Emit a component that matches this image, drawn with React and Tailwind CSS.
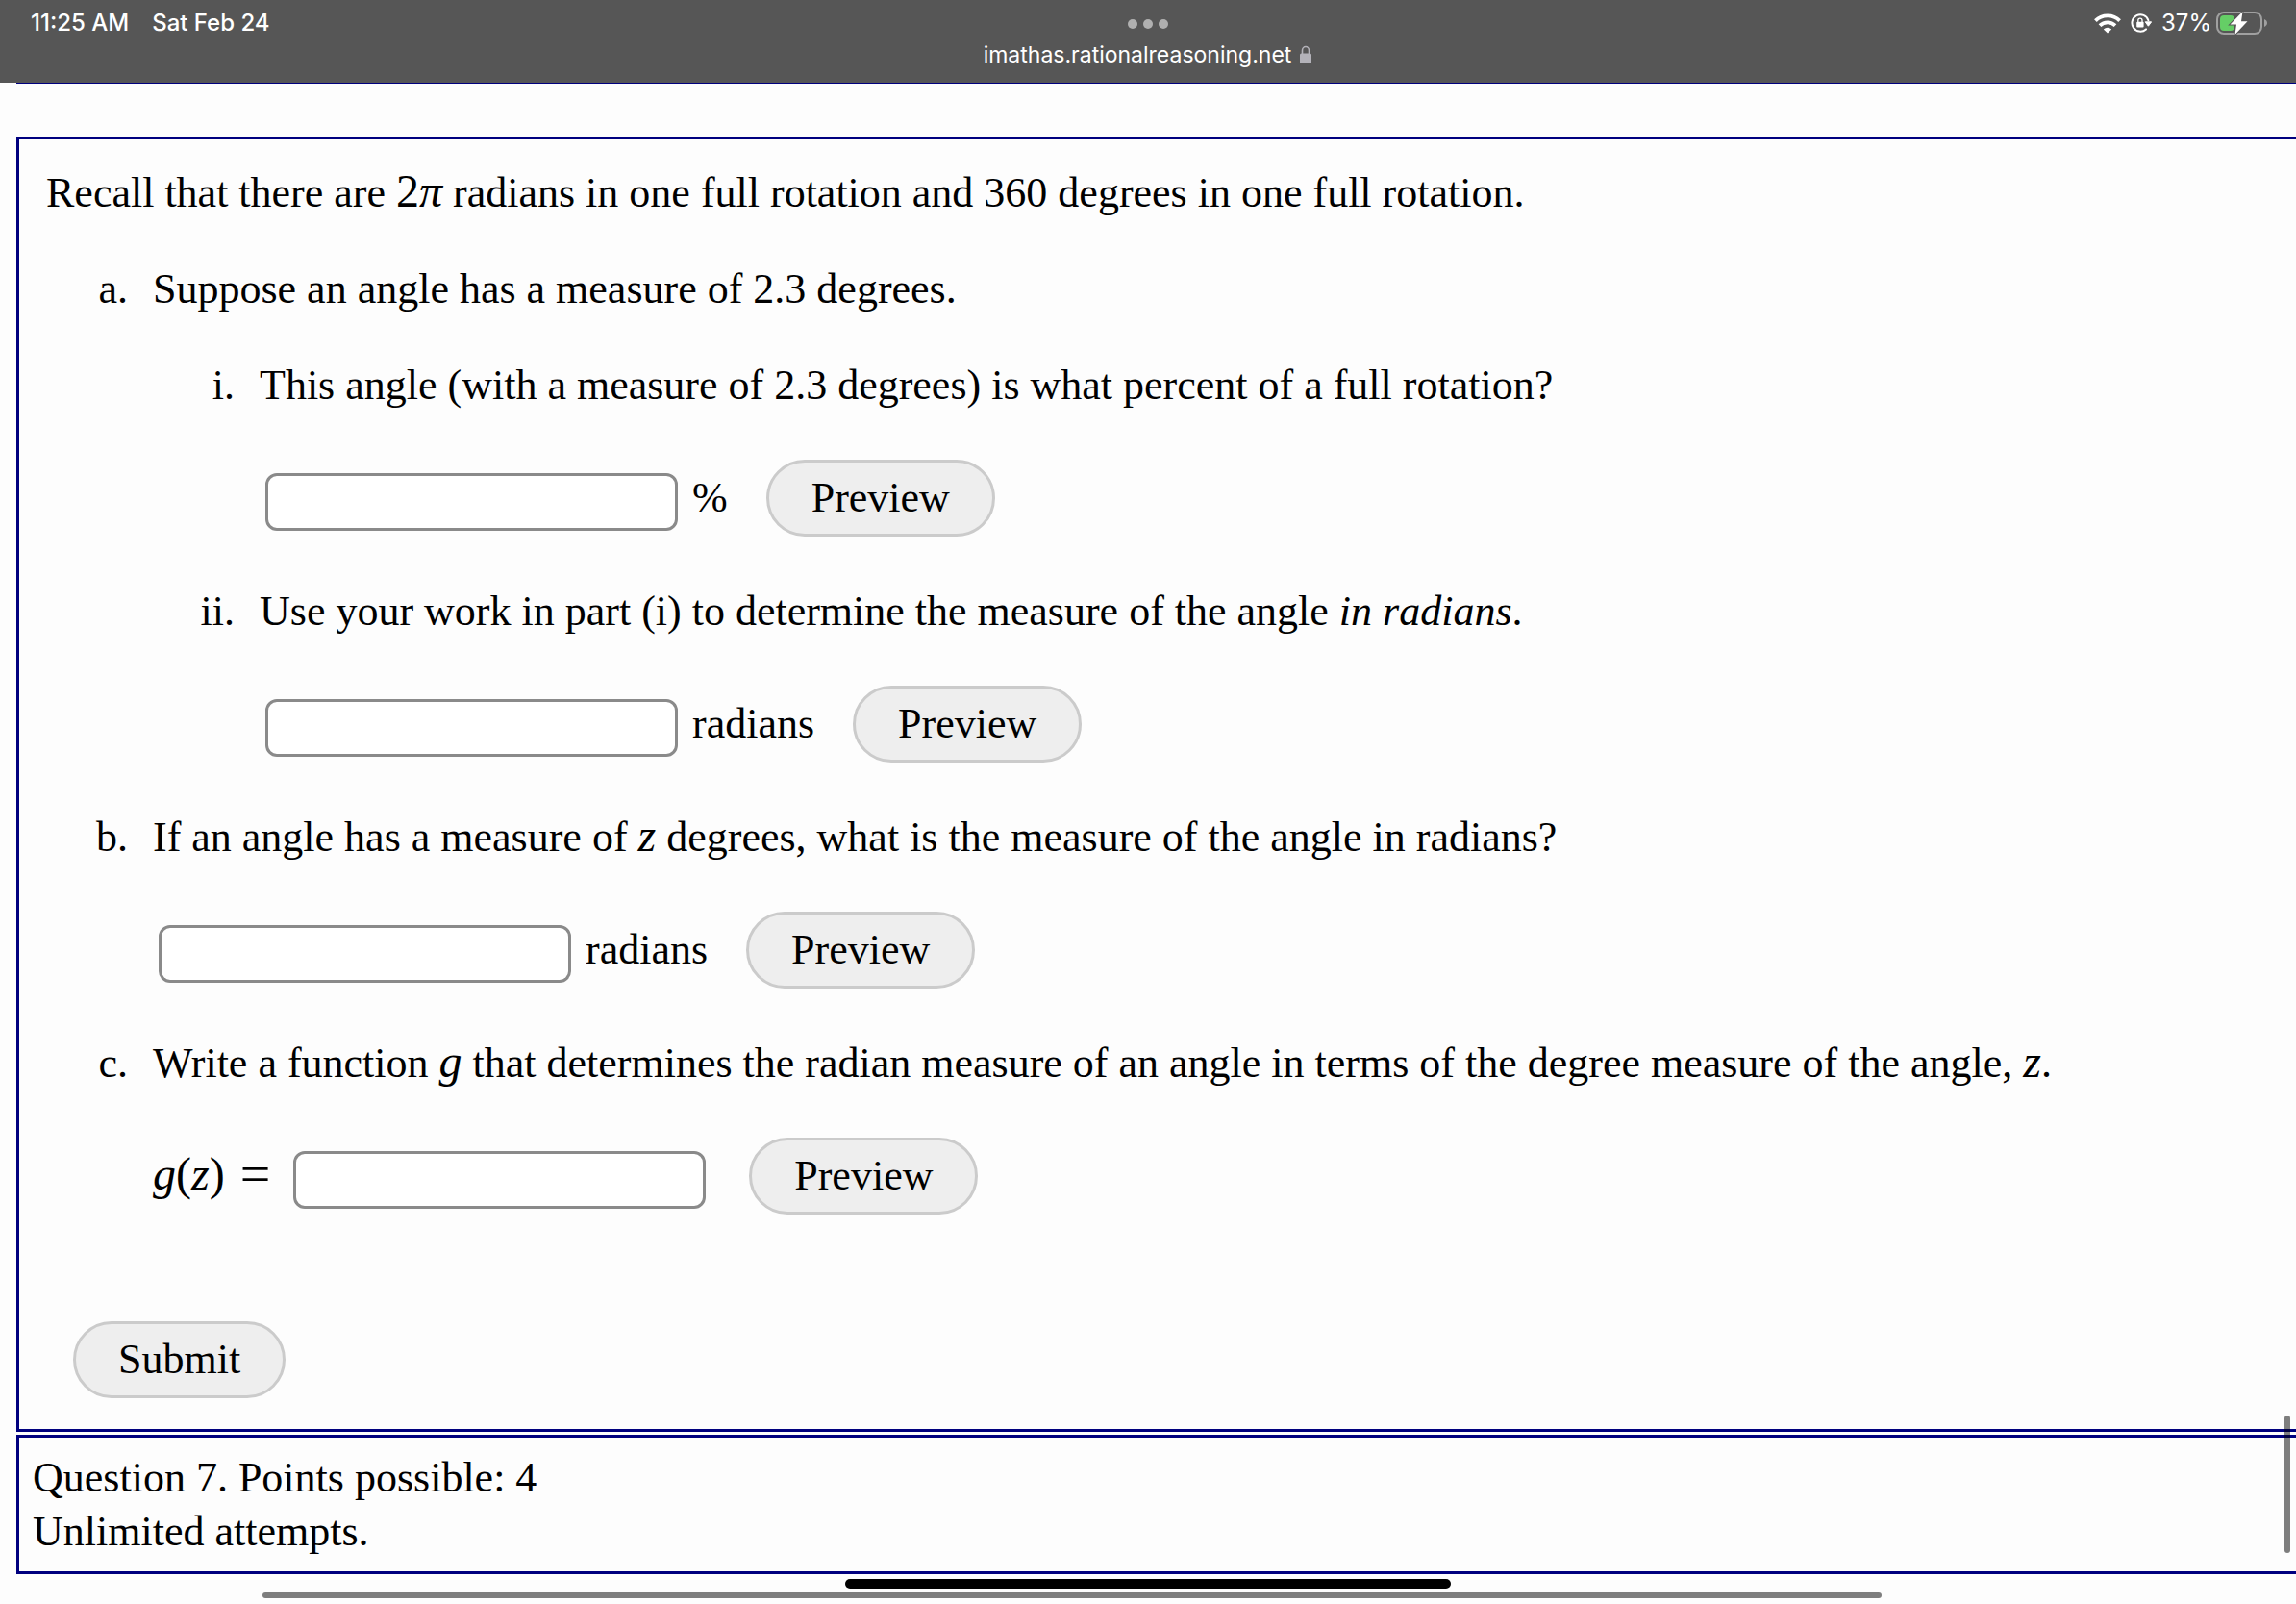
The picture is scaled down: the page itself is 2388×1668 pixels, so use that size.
const inputClass =
  "ml-[6px] h-[60px] w-[429px] rounded-[12px] border-[3px] border-[#8a8a8a] bg-white px-3 text-[32px] leading-none";

function PillButton({ children, className = "" }) {
  return (
    <button
      type="button"
      className={`h-[80px] rounded-[40px] border-[3px] border-[#cbcbcb] bg-[#eeeeee] px-[44px] leading-[56px] ${className}`}
    >
      {children}
    </button>
  );
}

function Item({ marker, children }) {
  return (
    <li className="flex">
      <span className="w-[111px] shrink-0 pr-[26px] text-right">{marker}</span>
      <div className="flex min-w-0 grow flex-col gap-[44px]">{children}</div>
    </li>
  );
}

function AnswerRow({ id, unit, label }) {
  return (
    <div className="flex items-baseline pt-[5px] pb-[6px]">
      <input id={id} type="text" aria-label={label} className={inputClass} />
      <label htmlFor={id} className="ml-[15px]">
        {unit}
      </label>
      <PillButton className="ml-[40px]">Preview</PillButton>
    </div>
  );
}

function M({ children }) {
  return <i className="text-[48px] leading-none italic">{children}</i>;
}

function WifiIcon() {
  return (
    <svg viewBox="0 0 28 21" className="h-[21px] w-[28px]" fill="none" stroke="white">
      <path d="M1.4 7.6a18 18 0 0 1 25.2 0" strokeWidth="3.8" />
      <path d="M6 12.6a11.4 11.4 0 0 1 16 0" strokeWidth="3.8" />
      <path d="M14 20.6l-4.200-4.200a6 6 0 0 1 8.400 0z" fill="white" stroke="none" />
    </svg>
  );
}

function RotationLockIcon() {
  return (
    <svg viewBox="0 0 22 20" className="h-[20px] w-[22px]" fill="none">
      <path d="M18.4 7.2A8.7 8.7 0 1 0 16 16.4" stroke="white" strokeWidth="2" strokeLinecap="round" />
      <path d="M15.2 8.8h6.4l-3.2 4.4z" fill="white" stroke="white" strokeLinejoin="round" />
      <rect x="6.2" y="8.8" width="7.4" height="5.6" rx="1" fill="white" />
      <path d="M7.8 9V7.2a2.1 2.1 0 0 1 4.2 0V9" stroke="white" strokeWidth="1.3" />
    </svg>
  );
}

function BatteryIcon() {
  return (
    <svg viewBox="0 0 54 26" className="h-[26px] w-[54px]">
      <rect x="1" y="2" width="46" height="22" rx="7" fill="none" stroke="#a0a0a0" strokeWidth="2" />
      <path d="M50 9v8c1.8-.8 3-2.200 3-4s-1.200-3.200-3-4z" fill="#a0a0a0" />
      <rect x="4" y="5" width="15" height="16" rx="4" fill="#65ce66" />
      <path d="M27.500 1L14.500 14.500h6.500L19.500 25 32.500 11.200H26z" fill="white" stroke="#555555" strokeWidth="2" paintOrder="stroke" />
    </svg>
  );
}

function PadlockIcon() {
  return (
    <svg viewBox="0 0 14 20" className="h-[20px] w-[14px]">
      <rect x="1" y="8.500" width="12" height="10.500" rx="1.500" fill="#b3b2b9" />
      <path d="M3.500 9V5.500a3.500 4 0 0 1 7 0V9" fill="none" stroke="#b3b2b9" strokeWidth="1.600" />
    </svg>
  );
}

export default function App() {
  return (
    <div className="relative min-h-screen overflow-hidden bg-[#fdfdfd] font-['Liberation_Serif','Times_New_Roman',serif] text-[44px] leading-[56px] text-black">
      <header className="grid h-[86px] grid-cols-3 bg-[#565656] font-[Inter,sans-serif] text-[24px] leading-[28px] text-white">
        <div className="flex gap-[24px] pt-[10px] pl-[32px] font-medium">
          <span>11:25 AM</span>
          <span>Sat Feb 24</span>
        </div>
        <div className="flex flex-col items-center pt-[20px]">
          <button type="button" aria-label="Window controls" className="flex gap-[6px]">
            <span className="size-[10px] rounded-full bg-[#b0b0b0]" />
            <span className="size-[10px] rounded-full bg-[#b0b0b0]" />
            <span className="size-[10px] rounded-full bg-[#b0b0b0]" />
          </button>
          <div className="mt-[13px] flex items-center gap-[8px] text-[23px]">
            <span>imathas.rationalreasoning.net</span>
            <PadlockIcon />
          </div>
        </div>
        <div className="flex h-[48px] items-center justify-end gap-[10px] pr-[29px]">
          <WifiIcon />
          <RotationLockIcon />
          <div className="flex items-center gap-[5px]">
            <span>37%</span>
            <BatteryIcon />
          </div>
        </div>
      </header>

      <main className="ml-[17px]">
        <div className="h-[56px] border-t border-[#00007f]" />

        <section className="border-y-[3px] border-l-[3px] border-[#00007f] pt-[28px] pb-[32px] pl-[28px]">
          <p>
            Recall that there are <span className="text-[48px] leading-none">2</span>
            <M>π</M> radians in one full rotation and 360 degrees in one full rotation.
          </p>
          <ol className="mt-[44px] flex flex-col gap-[44px]">
            <Item marker="a.">
              <p>Suppose an angle has a measure of 2.3 degrees.</p>
              <ol className="flex flex-col gap-[44px]">
                <Item marker="i.">
                  <p>This angle (with a measure of 2.3 degrees) is what percent of a full rotation?</p>
                  <AnswerRow id="a-i" unit="%" label="Percent of a full rotation" />
                </Item>
                <Item marker="ii.">
                  <p>
                    Use your work in part (i) to determine the measure of the angle <em>in radians</em>.
                  </p>
                  <AnswerRow id="a-ii" unit="radians" label="Angle in radians" />
                </Item>
              </ol>
            </Item>
            <Item marker="b.">
              <p>
                If an angle has a measure of <M>z</M> degrees, what is the measure of the angle in radians?
              </p>
              <AnswerRow id="b" unit="radians" label="z degrees in radians" />
            </Item>
            <Item marker="c.">
              <p>
                Write a function <M>g</M> that determines the radian measure of an angle in terms of the degree
                measure of the angle, <M>z</M>.
              </p>
              <div className="flex items-baseline pt-[5px] pb-[6px]">
                <label htmlFor="c" className="mr-[18px] flex items-center gap-[16px]">
                  <span className="text-[48px]">
                    <M>g</M>(<M>z</M>)
                  </span>
                  <span className="text-[56px]">=</span>
                </label>
                <input id="c" type="text" className={inputClass} />
                <PillButton className="ml-[45px]">Preview</PillButton>
              </div>
            </Item>
          </ol>
          <PillButton className="mt-[105px] ml-[28px]">Submit</PillButton>
        </section>

        <section className="mt-[3px] border-y-[3px] border-l-[3px] border-[#00007f] pt-[14px] pb-[13px] pl-[14px]">
          <p>Question 7. Points possible: 4</p>
          <p>Unlimited attempts.</p>
        </section>
      </main>

      <div className="absolute right-[6px] bottom-[53px] h-[143px] w-[6px] rounded-full bg-black/50" />
      <div className="absolute bottom-[6px] left-[273px] h-[6px] w-[1684px] rounded-full bg-black/50" />
      <div className="absolute bottom-[16px] left-1/2 h-[10px] w-[630px] -translate-x-1/2 rounded-full bg-black" />
    </div>
  );
}
